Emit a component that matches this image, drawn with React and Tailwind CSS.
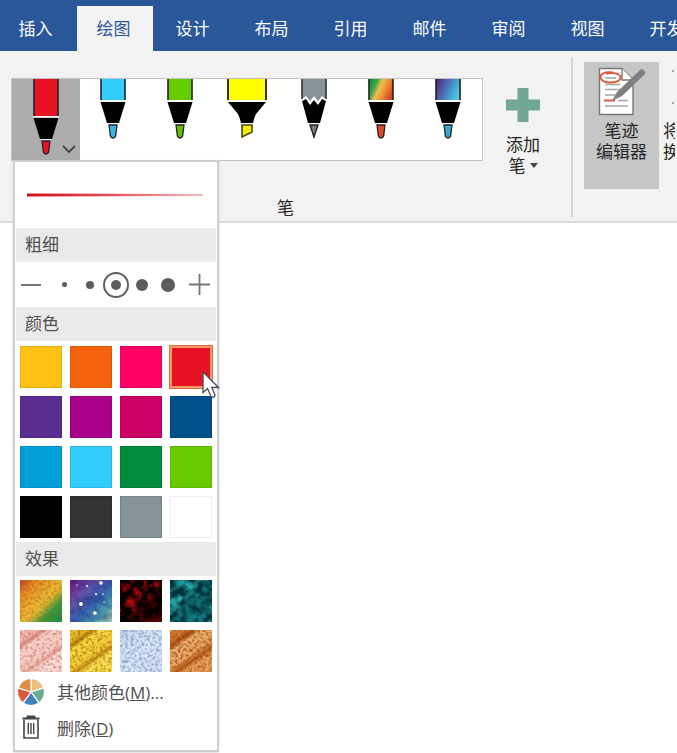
import React from "react";

const TABS = ["插入", "绘图", "设计", "布局", "引用", "邮件", "审阅", "视图", "开发"];

const PENS = [
  { id: "red", name: "红色笔", fill: "#e81224", tip: "#e81224" },
  { id: "sky", name: "天蓝色笔", fill: "#33ccff", tip: "#33b8e8" },
  { id: "green", name: "绿色笔", fill: "#66cc00", tip: "#66c000" },
  { id: "yellow", name: "荧光笔", kind: "highlighter", fill: "#ffff00", tip: "#f5ee00" },
  { id: "gray", name: "铅笔", kind: "pencil", fill: "#849398", tip: "#6f7f85" },
  { id: "rainbow", name: "彩虹笔", fill: "url(#pen-rainbow)", tip: "#e04a26" },
  { id: "galaxy", name: "银河笔", fill: "url(#pen-galaxy)", tip: "#35a8cc" },
];

const COLORS = [
  ["金色", "bg-[#ffc114]"],
  ["橙色", "bg-[#f6630d]"],
  ["粉色", "bg-[#ff0066]"],
  ["红色", "bg-[#e71224]"],
  ["紫色", "bg-[#5b2d90]"],
  ["品红", "bg-[#ab008b]"],
  ["深粉", "bg-[#cc0066]"],
  ["深蓝", "bg-[#004f8b]"],
  ["蓝色", "bg-[#00a0d7]"],
  ["天蓝", "bg-[#33ccff]"],
  ["深绿", "bg-[#008c3a]"],
  ["绿色", "bg-[#66cc00]"],
  ["黑色", "bg-black"],
  ["深灰", "bg-[#333333]"],
  ["灰色", "bg-[#849398]"],
  ["白色", "bg-white"],
];

const EFFECTS = [
  { id: "rainbow", name: "彩虹", freq: "0.35", seed: 2, noise: "#8a5a00", gain: 1, bias: -0.35,
    stops: [["0", "#c8402a"], ["0.2", "#ec8a28"], ["0.5", "#f4bc38"], ["0.6", "#d8b838"], ["0.74", "#3a9c40"], ["1", "#0c9650"]] },
  { id: "galaxy", name: "银河", freq: "0.12", seed: 5, noise: "#1c1a6c", gain: 1, bias: -0.4,
    stops: [["0", "#8a1a8c"], ["0.3", "#6450a4"], ["0.55", "#3460ac"], ["0.78", "#4a9cac"], ["1", "#b8e4b4"]], stars: true },
  { id: "lava", name: "熔岩", freq: "0.11", seed: 7, noise: "#000000", gain: 2.6, bias: -0.6,
    stops: [["0", "#b00008"], ["0.45", "#d80c0c"], ["0.6", "#500004"], ["1", "#700006"]] },
  { id: "ocean", name: "海洋", freq: "0.12", seed: 11, noise: "#00303a", gain: 2.6, bias: -0.8,
    stops: [["0", "#108088"], ["0.35", "#2aacac"], ["0.6", "#0c6c74"], ["1", "#1898a0"]] },
  { id: "rose", name: "玫瑰金", freq: "0.36", seed: 3, noise: "#c4685c", gain: 1.8, bias: -0.75, diagonal: true,
    stops: [["0", "#f4c4b8"], ["0.2", "#f0b8ac"], ["0.26", "#d88c80"], ["0.34", "#f8d4cc"], ["0.66", "#f8d0c8"], ["0.74", "#e4a498"], ["0.8", "#fadcd4"], ["1", "#fae0d8"]] },
  { id: "gold", name: "金色", freq: "0.36", seed: 4, noise: "#985c00", gain: 1.8, bias: -0.75, diagonal: true,
    stops: [["0", "#f0c830"], ["0.2", "#e4b424"], ["0.26", "#b47c0c"], ["0.34", "#f8dc44"], ["0.66", "#f4cc34"], ["0.74", "#c48c14"], ["0.8", "#f8e050"], ["1", "#f8e050"]] },
  { id: "silver", name: "银色", freq: "0.36", seed: 6, noise: "#6c84b4", gain: 1.8, bias: -0.72,
    stops: [["0", "#ccd8ee"], ["0.5", "#dde8f8"], ["1", "#d4e0f4"]] },
  { id: "bronze", name: "青铜色", freq: "0.36", seed: 9, noise: "#903800", gain: 1.8, bias: -0.72, diagonal: true,
    stops: [["0", "#dc9450"], ["0.2", "#cc7430"], ["0.26", "#a84c10"], ["0.36", "#ecb070"], ["0.62", "#e8a864"], ["0.74", "#b85c1c"], ["0.82", "#e4a058"], ["1", "#e8a460"]] },
];

const SIZES = [
  ["最细", "size-[5px]"],
  ["细", "size-2"],
  ["中", "size-2.5"],
  ["粗", "size-3"],
  ["最粗", "size-3.5"],
];

function Pen({ pen, selected }) {
  const h = selected ? 37 : 21;
  if (pen.kind === "highlighter") {
    return (
      <svg width="40" height="81" viewBox="-20 0 40 81" className="block" aria-hidden="true">
        <path d="M-19 0V21H19V0Z" fill={pen.fill} />
        <path d="M-19 0V21M19 0V21" stroke="#333" strokeWidth="2" />
        <path d="M-19 23H19L9 35Q7 39 6 44H-6Q-7 39 -9 35Z" fill="#000" />
        <path d="M-5 46H5V53L-5 58Z" fill={pen.tip} stroke="#4b4900" strokeWidth="1.6" />
      </svg>
    );
  }
  if (pen.kind === "pencil") {
    return (
      <svg width="40" height="81" viewBox="-20 0 40 81" className="block" aria-hidden="true">
        <path d="M-12 0H12V20L8 17L4 22L0 17L-4 22L-8 17L-12 20Z" fill={pen.fill} />
        <path d="M-12 0V20M12 0V20" stroke="#333" strokeWidth="1.6" />
        <path d="M-12 22L-8 20L-4 26L0 21L4 26L8 20L12 22L6 44H-6Z" fill="#000" />
        <path d="M-4 46H4L0 58Z" fill={pen.tip} stroke="#222" strokeWidth="1.4" />
      </svg>
    );
  }
  return (
    <svg width="40" height="81" viewBox="-20 0 40 81" className="block" aria-hidden="true">
      <rect x="-12" y="0" width="24" height={h} fill={pen.fill} />
      <path d={`M-12 0V${h}M12 0V${h}`} stroke="#222" strokeWidth="1.6" />
      <g transform={`translate(0 ${h})`}>
        <path d="M-13 0.7H13M-5 24H5" stroke="#fff" strokeWidth="1.4" />
        <path d="M-12.5 2H12.5L6 23H-6Z" fill="#000" />
        <path d="M-4 25H4L2.6 36Q2 38 0 38Q-2 38 -2.6 36Z" fill={pen.tip} stroke="#222" strokeWidth="1.3" />
      </g>
    </svg>
  );
}

function Texture({ effect }) {
  const { id, freq, seed, noise, gain, bias, diagonal, stops, stars } = effect;
  return (
    <svg width="42" height="42" viewBox="0 0 42 42" className="block" aria-hidden="true">
      <defs>
        <linearGradient id={`fill-${id}`} x1="0" y1="0" x2={diagonal ? "0.7" : "1"} y2="1">
          {stops.map(([offset, color]) => (
            <stop key={offset} offset={offset} stopColor={color} />
          ))}
        </linearGradient>
        <filter id={`grain-${id}`} x="0" y="0" width="1" height="1">
          <feTurbulence type="fractalNoise" baseFrequency={freq} numOctaves="3" seed={seed} result="n" />
          <feColorMatrix
            in="n"
            type="matrix"
            values={`0 0 0 0 0  0 0 0 0 0  0 0 0 0 0  ${gain} 0 0 0 ${bias}`}
            result="mask"
          />
          <feFlood floodColor={noise} />
          <feComposite operator="in" in2="mask" />
        </filter>
      </defs>
      <rect width="42" height="42" fill={`url(#fill-${id})`} />
      <rect width="42" height="42" filter={`url(#grain-${id})`} />
      {stars && (
        <g fill="#fff">
          <circle cx="11" cy="24" r="1.9" />
          <circle cx="25" cy="33" r="1.8" />
          <circle cx="31" cy="3" r="1.7" />
          <circle cx="17" cy="6" r="1" />
          <circle cx="26" cy="14" r="1" />
          <circle cx="33" cy="14" r="0.8" />
          <circle cx="34" cy="22" r="0.7" />
          <circle cx="7" cy="5" r="0.7" />
        </g>
      )}
    </svg>
  );
}

function EditorIcon() {
  return (
    <svg width="48" height="50" viewBox="0 0 48 50" className="block" aria-hidden="true">
      <path d="M1.500 1.500H24L35 13V47.500H1.500Z" fill="#fff" stroke="#777" strokeWidth="1.4" />
      <path d="M24 1.500V13H35" fill="#fff" stroke="#777" strokeWidth="1.4" />
      <path d="M7 11H18M7 17.500H22M7 22.500H29M7 28H20M20 33.500H30M7 39H30" stroke="#a6a6a6" strokeWidth="1.5" />
      <path d="M15 5.500C7 4 2 7 2.500 10.500C3 14 8 15.500 13 15.500C19 15.500 23 13 22.500 10C22 7 17 5 8 6.500" fill="none" stroke="#dc5a3c" strokeWidth="1.8" />
      <path d="M6 33.500H17" stroke="#dc5a3c" strokeWidth="2" />
      <path d="M14 34L19 25L42 3Q44 1.500 46 3.500Q48 5.500 46.500 7.500L24 29Z" fill="#7f7f7f" />
    </svg>
  );
}

const WHEEL = ["#e9c07c", "#6daa95", "#4180bd", "#d95a3b", "#e18c47"];

function ColorWheel() {
  const point = (deg) => {
    const a = (deg * Math.PI) / 180;
    return `${14 + 13.5 * Math.cos(a)} ${14 + 13.5 * Math.sin(a)}`;
  };
  return (
    <svg width="28" height="28" viewBox="0 0 28 28" className="block" aria-hidden="true">
      {WHEEL.map((color, i) => (
        <path
          key={color}
          d={`M14 14L${point(-90 + i * 72)}A13.5 13.5 0 0 1 ${point(-18 + i * 72)}Z`}
          fill={color}
          stroke="#fff"
          strokeWidth="1.2"
        />
      ))}
    </svg>
  );
}

function TrashIcon() {
  return (
    <svg width="28" height="28" viewBox="0 0 28 28" className="block" fill="none" stroke="#444" aria-hidden="true">
      <path d="M5.500 4.500H22.500M10.500 3.500V2.500H17.500V3.500" strokeWidth="1.8" />
      <path d="M7 5.500V24H21V5.500" strokeWidth="1.6" />
      <path d="M11.300 9V20M14 9V20M16.700 9V20" strokeWidth="1.4" />
    </svg>
  );
}

function Heading({ children }) {
  return <h2 className="mx-px h-[34px] bg-[#eaeaea] pl-[9px] leading-[33px] text-[#505050]">{children}</h2>;
}

function PenMenu() {
  return (
    <div className="absolute left-0.5 top-[82px] z-10 w-[206px] border-2 border-[#cfcfcf] bg-white pb-1 shadow-sm">
      <svg viewBox="0 0 202 66" className="block w-full" role="img" aria-label="笔画预览">
        <path d="M12 31.500L188 32V34L12 34.500Z" fill="url(#stroke-fade)" />
      </svg>
      <Heading>粗细</Heading>
      <div className="flex h-[45px] items-center">
        <button aria-label="减小粗细" className="flex w-9 pl-1.5">
          <span className="h-0.5 w-5 bg-[#757575]" />
        </button>
        {SIZES.map(([name, size], i) => (
          <label key={name} className="flex w-[26px] justify-center">
            <input type="radio" name="thickness" aria-label={name} defaultChecked={i === 2} className="peer sr-only" />
            <span className="flex size-[26px] items-center justify-center rounded-full border-2 border-transparent peer-checked:border-[#606060]">
              <span className={`rounded-full bg-[#5c5c5c] ${size}`} />
            </span>
          </label>
        ))}
        <button aria-label="增大粗细" className="flex flex-1 justify-center">
          <svg width="21" height="21" viewBox="0 0 21 21" stroke="#757575" strokeWidth="1.8" aria-hidden="true">
            <path d="M0 10.500H21M10.500 0V21" />
          </svg>
        </button>
      </div>
      <Heading>颜色</Heading>
      <div className="grid grid-cols-[repeat(4,42px)] gap-2 pb-1 pl-[5px] pt-[5px]">
        {COLORS.map(([name, color]) => {
          const selected = name === "红色";
          return (
            <button
              key={name}
              aria-label={name}
              aria-pressed={selected}
              className={`relative size-[42px] ${color} ${
                selected
                  ? "outline outline-[#e0703c] ring-2 ring-inset ring-[#f79a68]"
                  : name === "白色"
                    ? "border border-[#eeeeee]"
                    : "border border-black/10"
              }`}
            >
              {selected && (
                <svg width="18" height="28" viewBox="0 0 18 28" className="absolute left-8 top-[25px] z-10" aria-hidden="true">
                  <path
                    d="M1 1V21.500L5.500 17.500L9 25.500Q10.500 27 12.500 25.500L13 24L9.800 16.500H16.500Z"
                    fill="#fff"
                    stroke="#4a4a58"
                    strokeWidth="1.3"
                  />
                </svg>
              )}
            </button>
          );
        })}
      </div>
      <Heading>效果</Heading>
      <div className="grid grid-cols-[repeat(4,42px)] gap-2 pb-0.5 pl-[5px] pt-1">
        {EFFECTS.map((effect) => (
          <button key={effect.id} aria-label={effect.name}>
            <Texture effect={effect} />
          </button>
        ))}
      </div>
      <button className="flex h-9 w-full items-center gap-3 pl-0.5 text-[#505050]">
        <ColorWheel />
        <span>
          其他颜色(<u>M</u>)...
        </span>
      </button>
      <button className="flex h-9 w-full items-center gap-3 pl-0.5 text-[#505050]">
        <TrashIcon />
        <span>
          删除(<u>D</u>)
        </span>
      </button>
    </div>
  );
}

export default function App() {
  return (
    <div className="min-h-screen overflow-hidden bg-white font-['Open_Sans','Noto_Sans_CJK_SC',sans-serif] text-[17px] leading-[21px] text-[#262626]">
      <svg width="0" height="0" className="absolute" aria-hidden="true">
        <defs>
          <linearGradient id="pen-rainbow" x1="0" y1="0.2" x2="1" y2="0.6">
            <stop offset="0" stopColor="#0c9444" />
            <stop offset="0.25" stopColor="#3fa444" />
            <stop offset="0.45" stopColor="#ecc050" />
            <stop offset="0.7" stopColor="#ee8c2c" />
            <stop offset="1" stopColor="#d04424" />
          </linearGradient>
          <linearGradient id="pen-galaxy" x1="0" y1="0.2" x2="1" y2="0.6">
            <stop offset="0" stopColor="#4c2c7c" />
            <stop offset="0.4" stopColor="#5068b4" />
            <stop offset="0.7" stopColor="#40a0cc" />
            <stop offset="1" stopColor="#54c8dc" />
          </linearGradient>
          <linearGradient id="stroke-fade">
            <stop offset="0" stopColor="#d40c20" />
            <stop offset="0.4" stopColor="#e04452" />
            <stop offset="1" stopColor="#f6bcc2" />
          </linearGradient>
        </defs>
      </svg>

      <nav className="flex h-[51px] items-end gap-[3px] overflow-hidden bg-[#2a569a] pt-1.5">
        {TABS.map((tab, i) => (
          <a
            key={tab}
            href="#"
            aria-current={tab === "绘图" ? "page" : undefined}
            className={`flex h-full shrink-0 items-center justify-center pr-[3px] ${i === 0 ? "w-[74px]" : "w-[76px]"} ${
              tab === "绘图" ? "bg-[#f2f2f2] text-[#2a569a]" : "text-white"
            }`}
          >
            {tab}
          </a>
        ))}
      </nav>

      <div className="flex h-[172px] border-b-2 border-[#dadada] bg-[#f2f2f2] pt-1.5">
        <section className="mb-1 flex w-[573px] shrink-0 flex-col justify-between border-r-2 border-[#d6d6d6]">
          <div className="flex pl-[11px]">
            <div className="relative mt-[21px]">
              <div className="flex border border-[#c2c2c6] bg-white">
                {PENS.map((pen, i) => (
                  <button
                    key={pen.id}
                    aria-label={pen.name}
                    aria-pressed={i === 0}
                    className={`relative flex h-[81px] justify-center ${i === 0 ? "w-[68px] bg-[#acacac]" : "w-[67px] pr-px"}`}
                  >
                    <Pen pen={pen} selected={i === 0} />
                    {i === 0 && (
                      <svg width="14" height="8" viewBox="0 0 14 8" className="absolute bottom-[7px] right-1" aria-hidden="true">
                        <path d="M1 1L7 7L13 1" fill="none" stroke="#444" strokeWidth="1.8" />
                      </svg>
                    )}
                  </button>
                ))}
              </div>
              <PenMenu />
            </div>
            <button className="flex flex-1 flex-col items-center pr-2 pt-[31px]">
              <svg width="34" height="34" viewBox="0 0 34 34" className="mb-3 block" aria-hidden="true">
                <path d="M11.500 0H22.500V11.500H34V22.500H22.500V34H11.500V22.500H0V11.500H11.500Z" fill="#72a893" />
              </svg>
              <span>添加</span>
              <span className="flex items-center gap-1">
                笔
                <svg width="8" height="5" viewBox="0 0 8 5" aria-hidden="true">
                  <path d="M0 0H8L4 5Z" fill="#444" />
                </svg>
              </span>
            </button>
          </div>
          <h2 className="text-center leading-[18px]">笔</h2>
        </section>

        <section className="flex pl-[11px] pt-[5px]">
          <button className="flex h-[127px] w-[75px] shrink-0 flex-col items-center bg-[#c6c6c6] pt-[5px]">
            <EditorIcon />
            <span className="mt-[3px]">笔迹</span>
            <span>编辑器</span>
          </button>
          <button className="ml-1 flex w-3 flex-col items-end overflow-hidden pt-2">
            <svg width="12" height="50" viewBox="0 0 12 50" className="block shrink-0" aria-hidden="true">
              <path d="M9 1H11M9 33H11" stroke="#888" strokeWidth="1.5" />
            </svg>
            <span className="w-full">将</span>
            <span className="w-full">换</span>
          </button>
        </section>
      </div>
    </div>
  );
}
